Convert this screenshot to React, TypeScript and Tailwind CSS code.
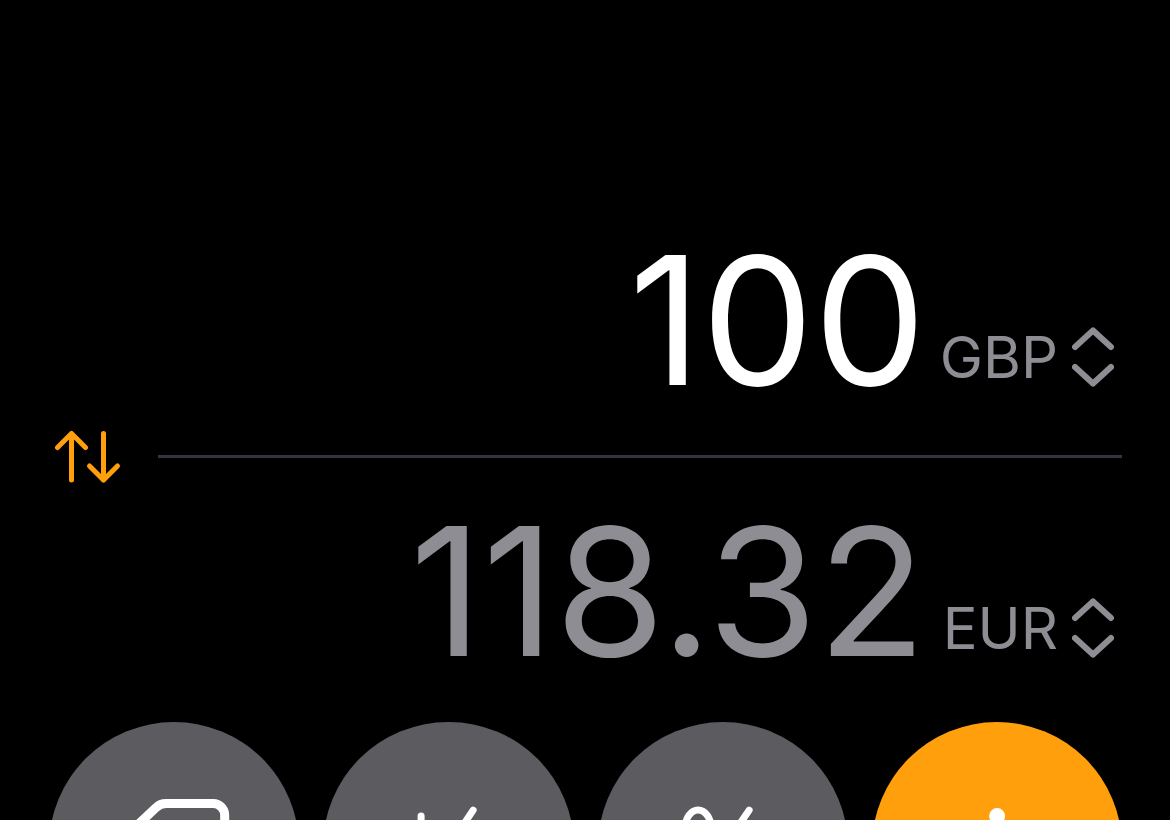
import type { ReactNode } from 'react'

const currencies = ['GBP', 'EUR']

function Amount({ id, label, value, currency, muted }: {
    id: string
    label: string
    value: string
    currency: string
    muted?: boolean
}) {
    return (
        <div className="flex items-end justify-end pr-2">
            <output
                aria-label={label}
                className={`text-[178px] leading-[176px] ${muted ? 'text-[#8e8d93]' : 'text-white'}`}
            >
                {value}
            </output>
            <label htmlFor={id} className="flex items-center gap-3.5 pb-4 pl-1 text-[#8e8d93]">
                <span className="sr-only">{label} currency</span>
                <select
                    id={id}
                    defaultValue={currency}
                    className="w-32 appearance-none bg-transparent text-right text-[58px] font-normal leading-[72px] outline-none"
                >
                    {currencies.map((code) => (
                        <option key={code}>{code}</option>
                    ))}
                </select>
                <svg
                    viewBox="0 0 42 60"
                    className="h-[60px] w-[42px] pointer-events-none"
                    fill="none"
                    stroke="currentColor"
                    strokeWidth="6"
                    strokeLinecap="round"
                    strokeLinejoin="round"
                >
                    <path d="M3 20 21 3.500l18 16.500M3 40l18 16.500L39 40" />
                </svg>
            </label>
        </div>
    )
}

function Key({ label, accent, children }: { label: string; accent?: boolean; children: ReactNode }) {
    return (
        <button
            type="button"
            aria-label={label}
            className={`aspect-square rounded-full text-white ${accent ? 'bg-[#ff9f0c]' : 'bg-[#5c5b60]'}`}
        >
            <svg
                viewBox="1 0 250 250"
                className="size-full"
                fill="none"
                stroke="currentColor"
                strokeWidth="7"
                strokeLinecap="round"
                strokeLinejoin="round"
            >
                {children}
            </svg>
        </button>
    )
}

export default function App() {
    return (
        <main className="h-screen overflow-hidden bg-black px-12 pt-[233px] font-['Inter',sans-serif]">
            <Amount id="from" label="From" value="100" currency="GBP" />

            <div className="flex h-[95px] items-center gap-9 pl-1.5">
                <button type="button" aria-label="Swap currencies" className="text-[#ff9f0c]">
                    <svg
                        viewBox="0 0 68 54"
                        className="h-[54px] w-[68px]"
                        fill="none"
                        stroke="currentColor"
                        strokeWidth="5"
                        strokeLinecap="round"
                        strokeLinejoin="round"
                    >
                        <path d="M17.5 50V4M3.5 17.5 17.5 3.5l14 14" />
                        <path d="M49.5 3.5V50M35.5 36l14 14 14-14" />
                    </svg>
                </button>
                <hr className="grow border-t-[3px] border-[#35343a]" />
            </div>

            <Amount id="to" label="To" value="118.32" currency="EUR" muted />

            {/* Keypad */}
            <div className="mt-[42px] grid grid-cols-4 gap-6 pl-px">
                <Key label="Delete">
                    <path
                        strokeWidth="9"
                        d="M118 81.5H165a11.500 11.500 0 0 1 11.500 11.500V159a11.500 11.500 0 0 1-11.500 11.500H118Q112 170.500 108 166.500L69 130Q65 126 69 122L108 85.500Q112 81.500 118 81.500Z"
                    />
                    <path d="m118 108 36 36m0-36-36 36" />
                </Key>
                <Key label="Plus or minus">
                    <path d="M99 94v40M79 114h40M151 88l-51 77M132 146h40" />
                </Key>
                <Key label="Percent">
                    <ellipse cx="101" cy="106" rx="13" ry="18" />
                    <path d="m152 88-52 77" />
                    <ellipse cx="150" cy="146" rx="13" ry="18" />
                </Key>
                <Key label="Divide" accent>
                    <circle cx="126" cy="94" r="8" fill="currentColor" stroke="none" />
                    <path d="M86 126h80" />
                    <circle cx="126" cy="158" r="8" fill="currentColor" stroke="none" />
                </Key>
            </div>
        </main>
    )
}
